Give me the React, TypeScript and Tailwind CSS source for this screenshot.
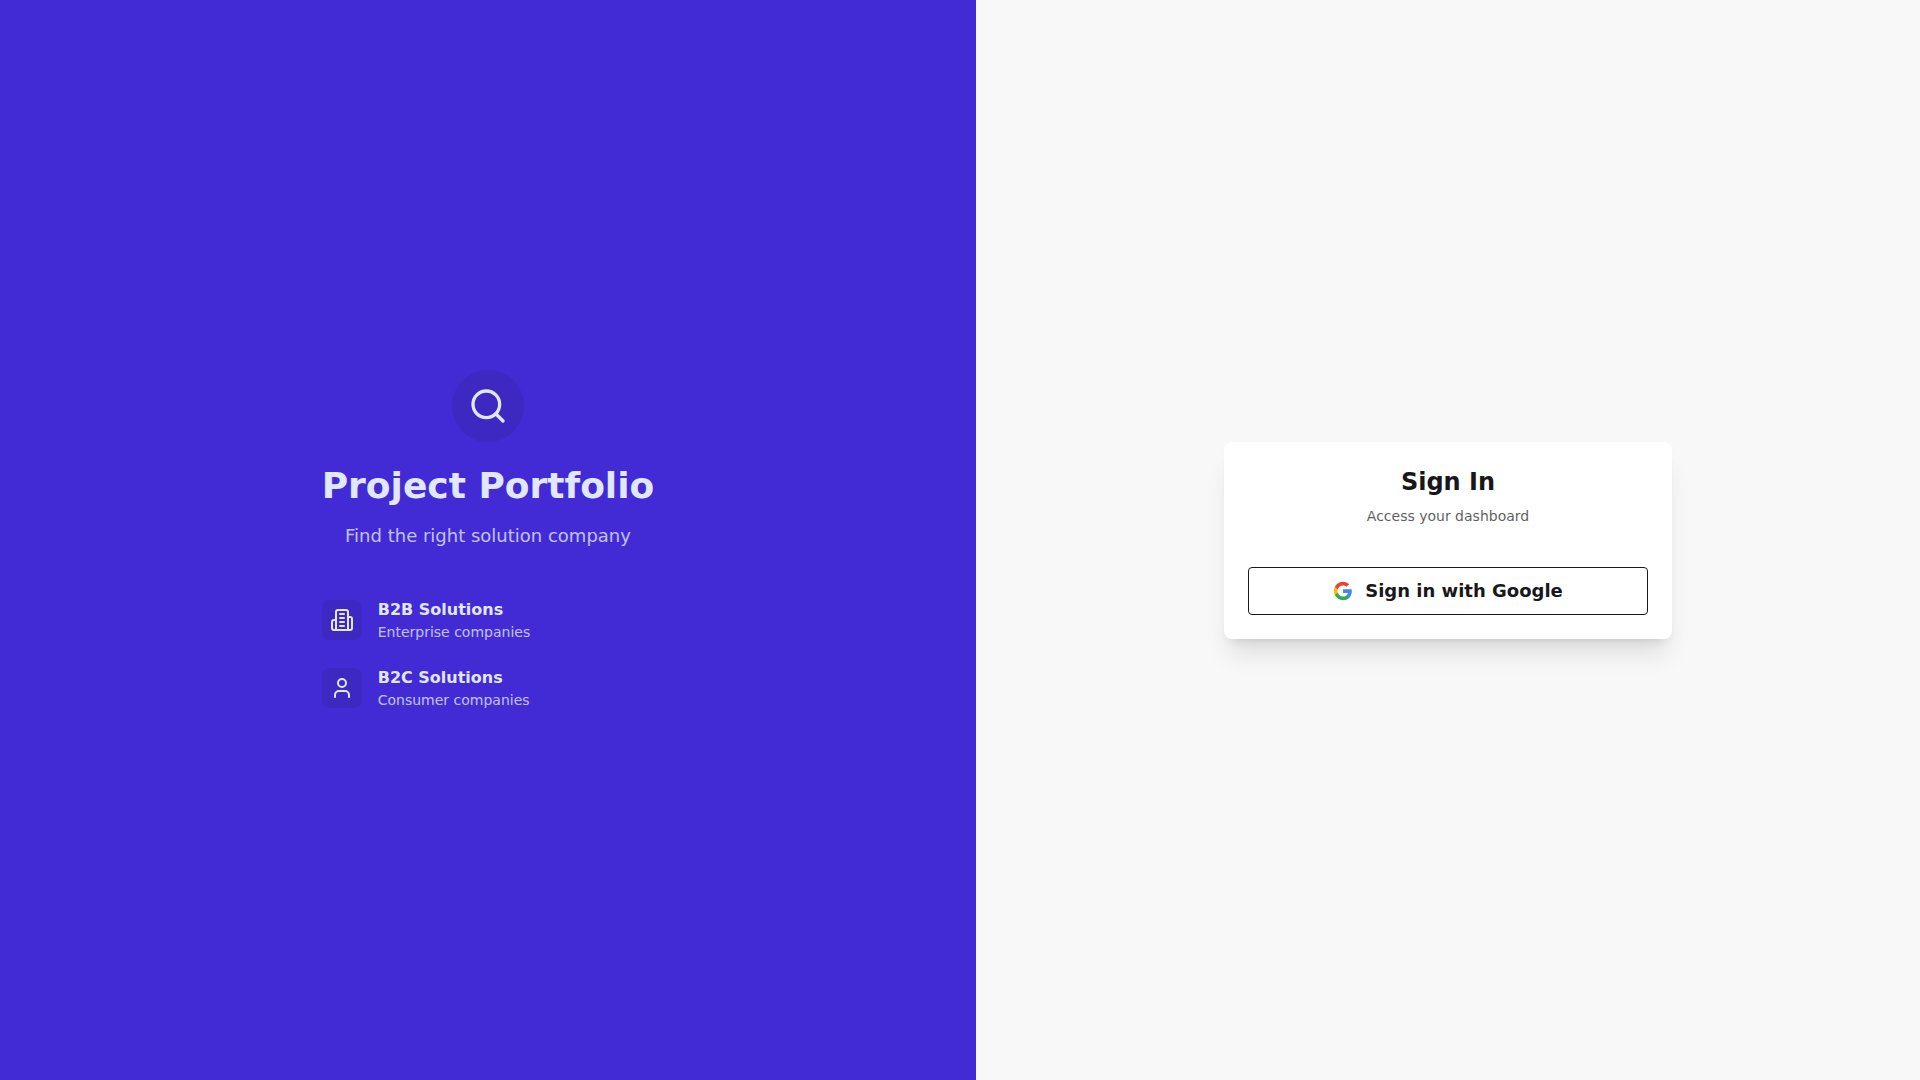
import type { ReactNode } from 'react'
import { Search, User } from 'lucide-react'

function BuildingIcon() {
  return (
    <svg
      className="h-6 w-6"
      viewBox="0 0 24 24"
      fill="none"
      stroke="currentColor"
      strokeWidth="2"
      strokeLinecap="round"
      strokeLinejoin="round"
      aria-hidden="true"
    >
      <path d="M6 22V4a2 2 0 0 1 2-2h8a2 2 0 0 1 2 2v18Z" />
      <path d="M6 12H4a2 2 0 0 0-2 2v6a2 2 0 0 0 2 2h2" />
      <path d="M18 9h2a2 2 0 0 1 2 2v9a2 2 0 0 1-2 2h-2" />
      <path d="M10 6h4" />
      <path d="M10 10h4" />
      <path d="M10 14h4" />
      <path d="M10 18h4" />
    </svg>
  )
}

function GoogleIcon() {
  return (
    <svg className="h-5 w-5" viewBox="0 0 24 24" aria-hidden="true">
      <path
        fill="#4285F4"
        d="M22.56 12.25c0-.78-.07-1.53-.2-2.25H12v4.26h5.92c-.26 1.37-1.04 2.53-2.21 3.31v2.77h3.57c2.08-1.92 3.28-4.74 3.28-8.09z"
      />
      <path
        fill="#34A853"
        d="M12 23c2.97 0 5.46-.98 7.28-2.66l-3.57-2.77c-.98.66-2.23 1.06-3.71 1.06-2.86 0-5.29-1.93-6.16-4.53H2.18v2.84C3.99 20.53 7.7 23 12 23z"
      />
      <path
        fill="#FBBC05"
        d="M5.84 14.09c-.22-.66-.35-1.36-.35-2.09s.13-1.43.35-2.09V7.07H2.18C1.43 8.55 1 10.22 1 12s.43 3.45 1.18 4.93l2.85-2.22.81-.62z"
      />
      <path
        fill="#EA4335"
        d="M12 5.38c1.62 0 3.06.56 4.21 1.64l3.15-3.15C17.45 2.09 14.97 1 12 1 7.7 1 3.99 3.47 2.18 7.07l3.66 2.84c.87-2.6 3.3-4.53 6.16-4.53z"
      />
    </svg>
  )
}

type FeatureProps = {
  icon: ReactNode
  title: string
  text: string
}

function Feature({ icon, title, text }: FeatureProps) {
  return (
    <li className="flex items-center gap-4">
      <div className="flex h-10 w-10 shrink-0 items-center justify-center rounded-lg bg-[#3e28c2]">{icon}</div>
      <div>
        <h3 className="font-semibold">{title}</h3>
        <p className="text-sm opacity-80">{text}</p>
      </div>
    </li>
  )
}

export default function App() {
  return (
    <div className="flex min-h-screen flex-col font-['DejaVu_Sans',sans-serif] lg:flex-row">
      {/* Intro panel */}
      <section className="flex flex-1 items-center justify-center bg-[#422ad5] p-12 text-[#e0e7ff]">
        <div>
          <div className="mb-12 text-center">
            <div className="mb-6 inline-flex rounded-full bg-[#3e28c2] p-4 align-top">
              <Search className="h-10 w-10" />
            </div>
            <h1 className="mb-4 text-4xl font-bold">Project Portfolio</h1>
            <p className="text-lg opacity-80">Find the right solution company</p>
          </div>
          <ul className="space-y-6">
            <Feature icon={<BuildingIcon />} title="B2B Solutions" text="Enterprise companies" />
            <Feature icon={<User className="h-6 w-6" />} title="B2C Solutions" text="Consumer companies" />
          </ul>
        </div>
      </section>

      {/* Sign in panel */}
      <main className="flex flex-1 items-center justify-center bg-[#f8f8f8] p-8 text-[#18181b]">
        <div className="w-full max-w-md rounded-lg bg-white p-6 shadow-xl">
          <div className="mb-[41px] text-center">
            <h2 className="mb-2 text-2xl font-bold">Sign In</h2>
            <p className="text-sm opacity-70">Access your dashboard</p>
          </div>
          <button
            type="button"
            className="flex h-12 w-full items-center justify-center gap-3 rounded border border-[#18181b] text-lg font-semibold"
          >
            <GoogleIcon />
            Sign in with Google
          </button>
        </div>
      </main>
    </div>
  )
}
